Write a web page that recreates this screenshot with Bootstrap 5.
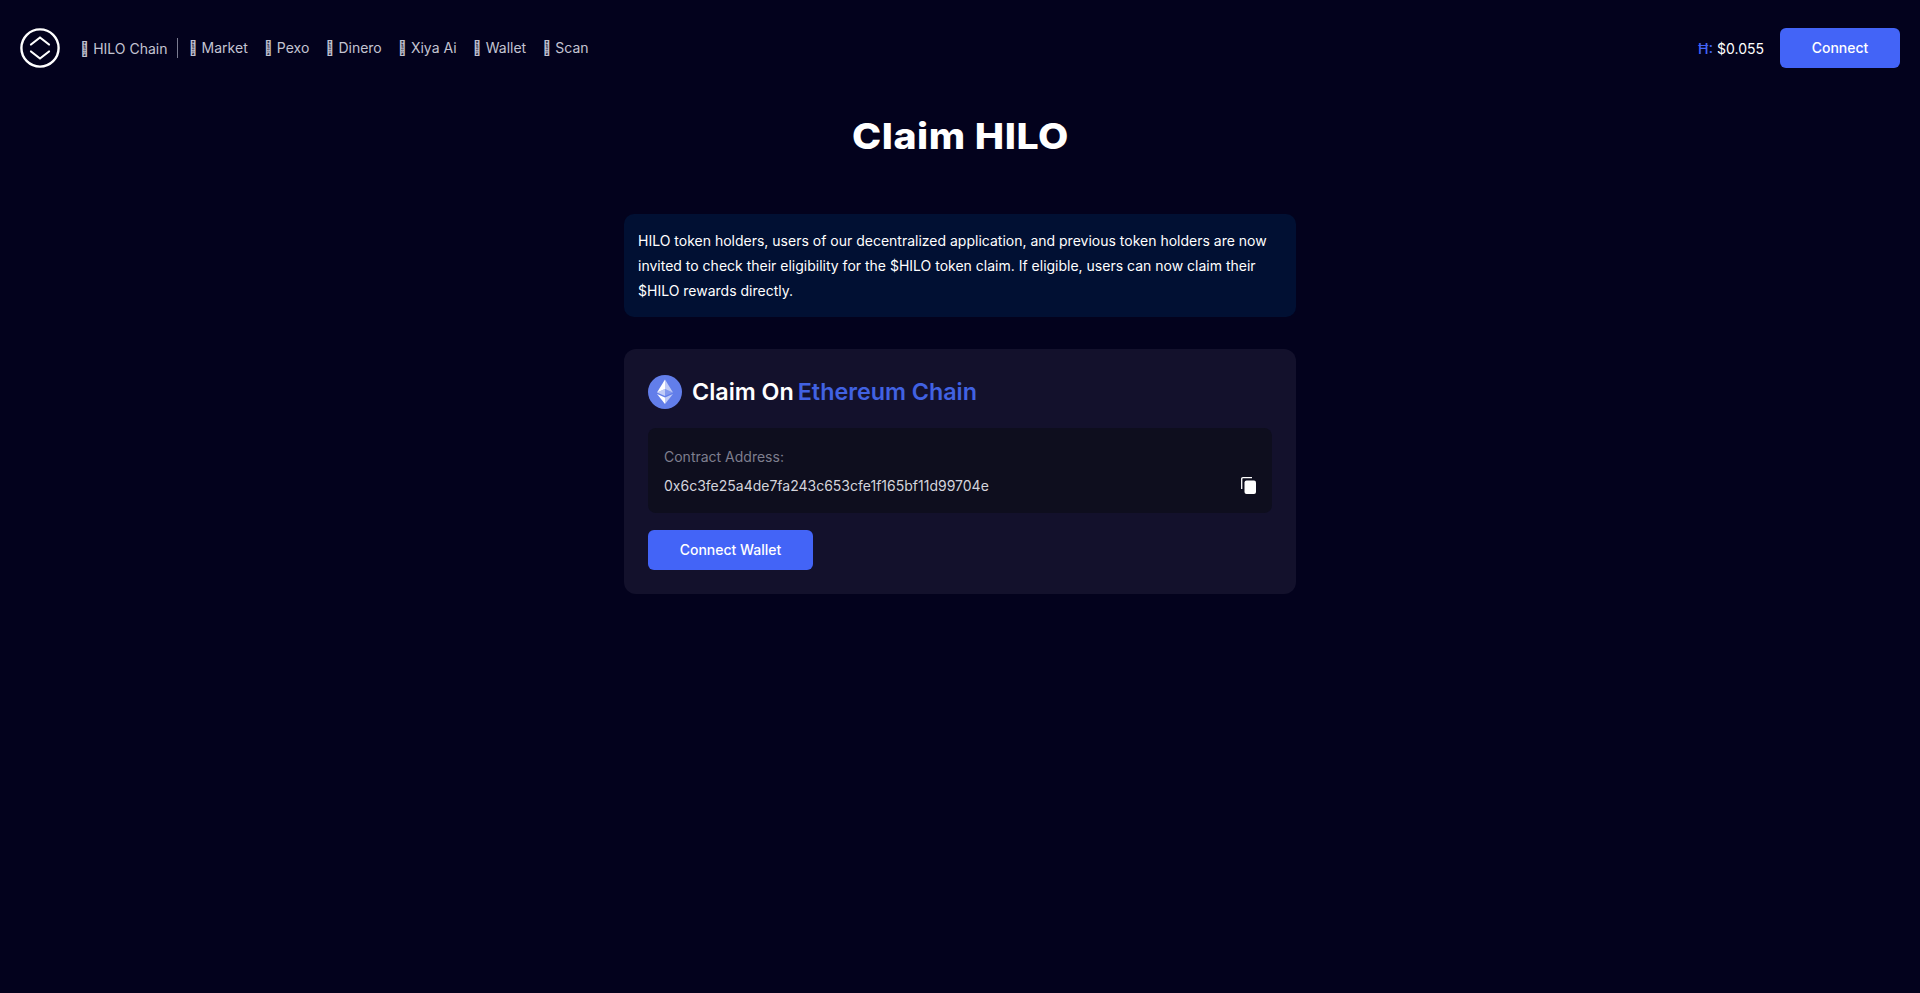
<!DOCTYPE html>
<html lang="en">
<head>
  <meta charset="UTF-8" />
  <meta name="viewport" content="width=device-width, initial-scale=1.0" />
  <title>Claim HILO</title>
  <link href="https://cdn.jsdelivr.net/npm/bootstrap@5.3.3/dist/css/bootstrap.min.css" rel="stylesheet" />
  <style>
    body {
      background: #03021d;
      color: #fff;
      font-family: Inter, "Liberation Sans", sans-serif;
      font-size: 14px;
      min-height: 993px;
    }
    .top-bar { height: 96px; padding: 0 20px; }
    .top-links { margin-left: 20px; }
    .top-links a {
      color: #c3c4d2;
      font-size: 14px;
      text-decoration: none;
      white-space: nowrap;
      padding-bottom: 2px;
    }
    .top-links a.chain-link { padding-bottom: 0; }
    .nav-sep { width: 1px; height: 20px; background: #7a7b90; margin: 0 10px; }
    .price-mark { color: #4364f7; font-weight: 500; }
    .btn-hilo {
      background: #4364f7;
      border: 0;
      border-radius: 6px;
      color: #fff;
      font-size: 14px;
      font-weight: 500;
      height: 40px;
      padding-bottom: 8px;
    }
    .btn-hilo:hover { background: #4364f7; color: #fff; }
    .btn-top { width: 120px; }
    .btn-wallet { width: 165px; margin-top: 17px; }
    .page-title {
      display: inline-block;
      font-size: 36px;
      font-weight: 800;
      line-height: 44px;
      margin: 18px 0 0;
      letter-spacing: 0.5px;
      transform: scaleX(1.09);
    }
    .claim-col { width: 672px; }
    .info-box {
      background: #011033;
      border-radius: 10px;
      margin-top: 56px;
      padding: 14px;
      line-height: 25px;
      height: 103px;
    }
    .claim-panel {
      background: #13112c;
      border-radius: 12px;
      margin-top: 32px;
      padding: 26px 24px 24px;
      height: 245px;
    }
    .claim-head { font-size: 23.3px; font-weight: 600; line-height: 34px; gap: 10px; }
    .claim-blue { color: #4162e2; }
    .addr-box {
      background: #0e0e1e;
      border-radius: 8px;
      margin-top: 19px;
      padding: 14px 16px 17px;
      height: 85px;
    }
    .addr-label { color: #7e7e8e; line-height: 20px; }
    .addr-val { color: #d4d4dc; line-height: 20px; margin-top: 9px; }
    .copy-icon { margin-bottom: 2px; }
  </style>
</head>
<body>
  <header class="top-bar d-flex align-items-center">
    <svg width="40" height="40" viewBox="0 0 40 40" fill="none" stroke="#fff" stroke-width="2.4">
      <circle cx="20" cy="20" r="18.6" />
      <path d="M11 16.5 L20 9.5 L29 16.5 M11 23.5 L20 30.5 L29 23.5" stroke-width="2.2" stroke-linecap="round" stroke-linejoin="round" />
    </svg>
    <nav class="top-links d-flex align-items-center">
      <a href="#" class="chain-link">&#xe900; HILO Chain</a>
      <span class="nav-sep"></span>
      <a href="#" class="me-3">&#xe901; Market</a>
      <a href="#" class="me-3">&#xe902; Pexo</a>
      <a href="#" class="me-3">&#xe903; Dinero</a>
      <a href="#" class="me-3">&#xe904; Xiya Ai</a>
      <a href="#" class="me-3">&#xe905; Wallet</a>
      <a href="#">&#xe906; Scan</a>
    </nav>
    <div class="ms-auto d-flex align-items-center gap-3">
      <span><span class="price-mark">Ħ:</span> $0.055</span>
      <button class="btn btn-hilo btn-top px-0">Connect</button>
    </div>
  </header>

  <main class="d-flex flex-column align-items-center">
    <h1 class="page-title text-center">Claim HILO</h1>
    <div class="claim-col">
      <div class="info-box">HILO token holders, users of our decentralized application, and previous token holders are now invited to check their eligibility for the $HILO token claim. If eligible, users can now claim their $HILO rewards directly.</div>
      <section class="claim-panel">
        <div class="claim-head d-flex align-items-center">
          <svg width="34" height="34" viewBox="0 0 34 34">
            <circle cx="17" cy="17" r="17" fill="#627eea" />
            <path d="M17 4.5 V14 L25 17.6 Z" fill="#fff" fill-opacity=".6" />
            <path d="M17 4.5 L9 17.6 L17 14 Z" fill="#fff" />
            <path d="M17 22.4 V29 L25 18.9 Z" fill="#fff" fill-opacity=".6" />
            <path d="M17 22.4 L9 18.9 L17 29 Z" fill="#fff" />
            <path d="M17 21 L25 17.6 L17 14 Z" fill="#fff" fill-opacity=".2" />
            <path d="M9 17.6 L17 21 V14 Z" fill="#fff" fill-opacity=".6" />
          </svg>
          <div class="d-flex gap-1">
            <span>Claim On</span>
            <span class="claim-blue">Ethereum Chain</span>
          </div>
        </div>
        <div class="addr-box d-flex justify-content-between align-items-end">
          <div>
            <div class="addr-label">Contract Address:</div>
            <div class="addr-val">0x6c3fe25a4de7fa243c653cfe1f165bf11d99704e</div>
          </div>
          <svg class="copy-icon" width="15" height="17" viewBox="0 0 15 17" fill="none">
            <path d="M.7 12 V2 Q.7 .7 2 .7 H11" stroke="#fff" stroke-width="1.3" />
            <rect x="3.5" y="3.5" width="11.5" height="13.5" rx="2" fill="#fff" />
          </svg>
        </div>
        <button class="btn btn-hilo btn-wallet d-block">Connect Wallet</button>
      </section>
    </div>
  </main>

  <script src="https://cdn.jsdelivr.net/npm/bootstrap@5.3.3/dist/js/bootstrap.bundle.min.js"></script>
</body>
</html>
